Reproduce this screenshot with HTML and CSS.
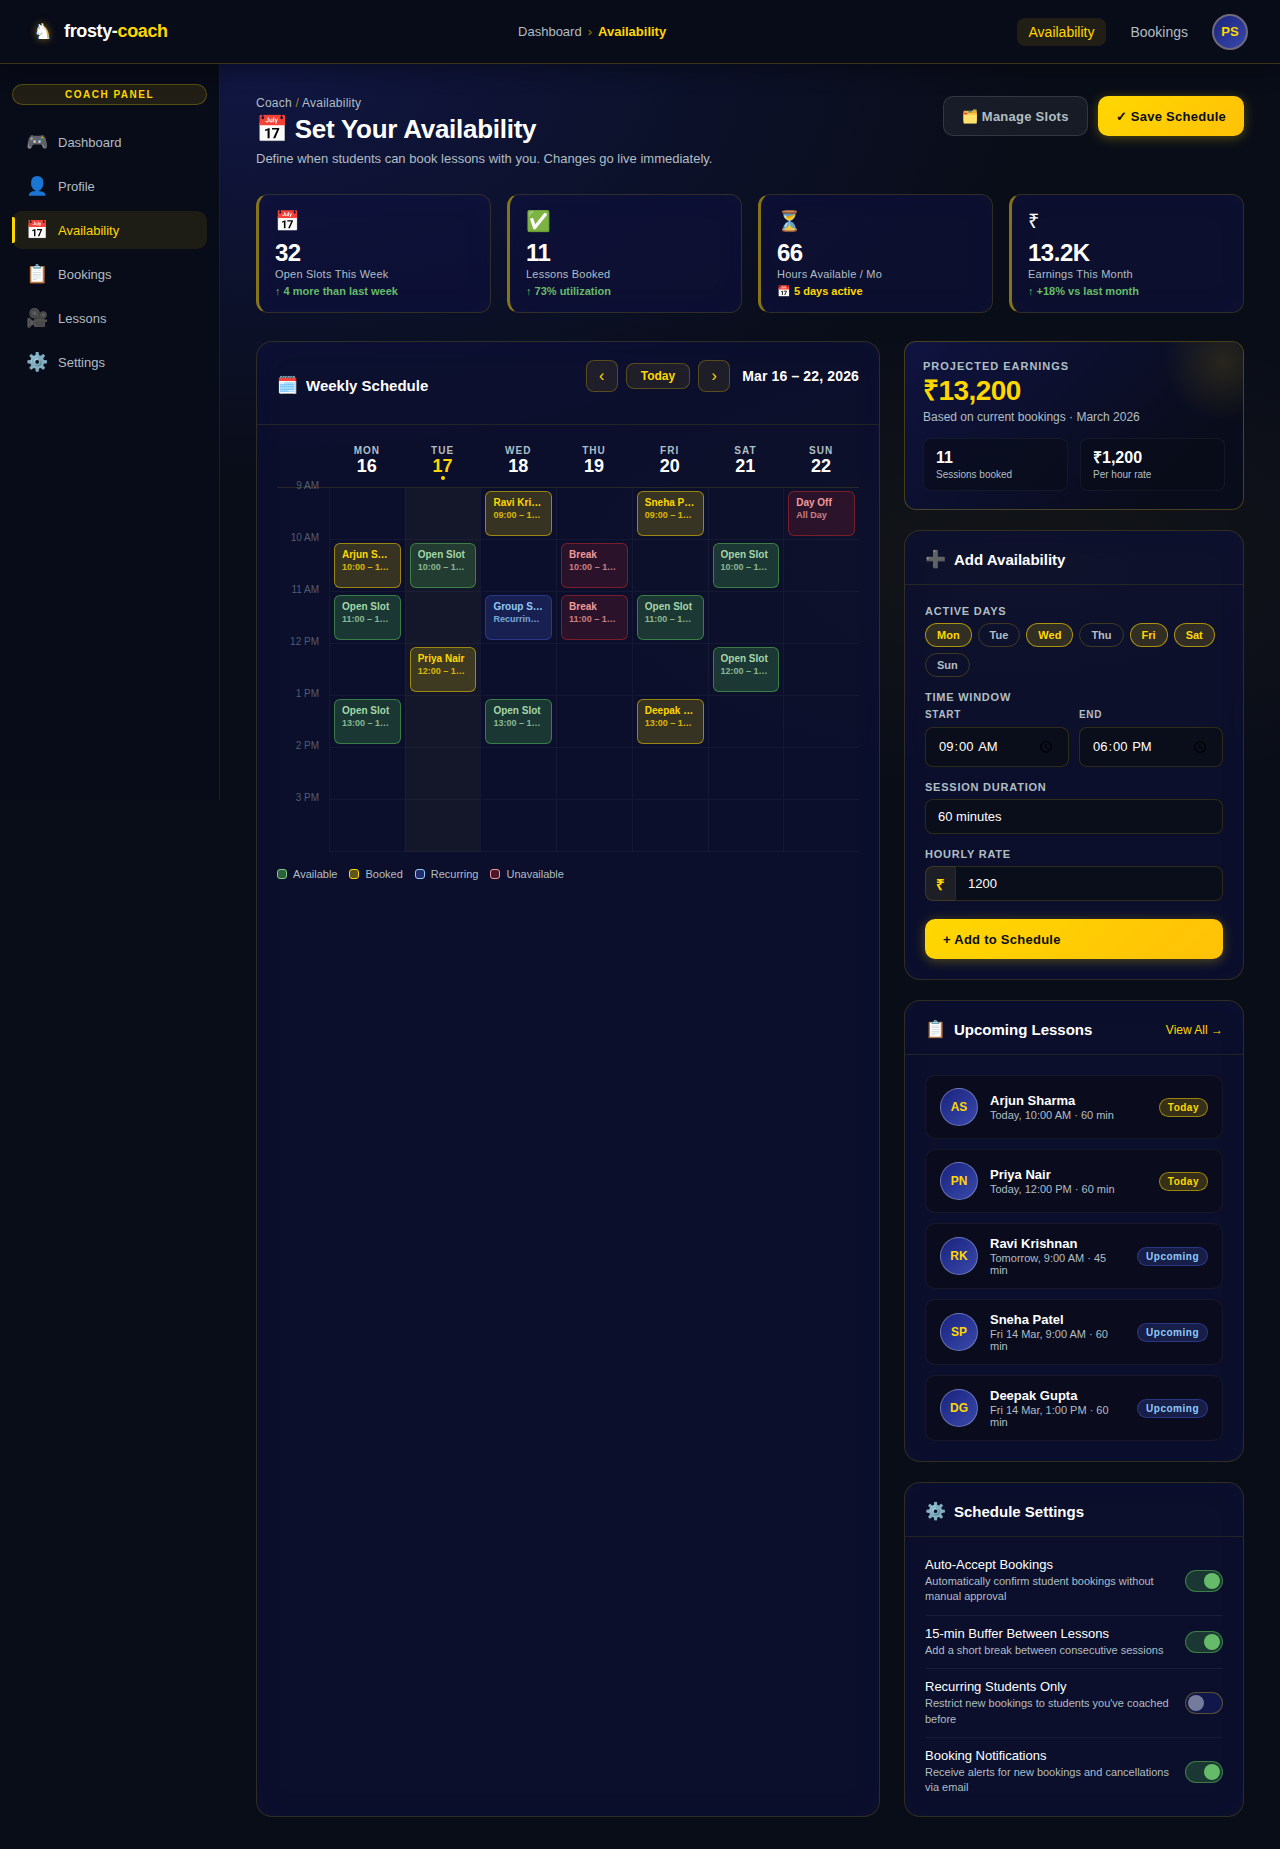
FILE: index.html
```html
<!DOCTYPE html>
<html lang="en">
<head>
  <meta charset="UTF-8">
  <meta name="viewport" content="width=device-width, initial-scale=1.0">
  <title>Availability - frosty-coach</title>
  <link rel="stylesheet" href="styles.css">
</head>
<body>

  <header class="topbar">
    <a class="logo" href="#">
      <span class="logo-icon">♞</span>
      <span>frosty-<span class="gold">coach</span></span>
    </a>
    <div class="topbar-path">
      <span>Dashboard</span>
      <span class="sep">›</span>
      <strong>Availability</strong>
    </div>
    <nav class="topbar-nav">
      <a class="active" href="#">Availability</a>
      <a href="#">Bookings</a>
      <div class="avatar avatar-me">PS</div>
    </nav>
  </header>

  <div class="layout">

    <aside class="sidebar">
      <div class="panel-tag">COACH PANEL</div>
      <nav class="side-nav">
        <a href="#"><span class="icon">🎮</span>Dashboard</a>
        <a href="#"><span class="icon">👤</span>Profile</a>
        <a class="active" href="#"><span class="icon">📅</span>Availability</a>
        <a href="#"><span class="icon">📋</span>Bookings</a>
        <a href="#"><span class="icon">🎥</span>Lessons</a>
        <a href="#"><span class="icon">⚙️</span>Settings</a>
      </nav>
    </aside>

    <main class="main">

      <div class="page-head">
        <div>
          <div class="crumbs">Coach <span class="sep">/</span> Availability</div>
          <h1>📅 Set Your Availability</h1>
          <p>Define when students can book lessons with you. Changes go live immediately.</p>
        </div>
        <div class="head-actions">
          <button class="btn btn-ghost" type="button">🗂️ Manage Slots</button>
          <button class="btn btn-gold" type="button">✓ Save Schedule</button>
        </div>
      </div>

      <section class="stats">
        <div class="stat">
          <div class="stat-icon">📅</div>
          <div class="stat-value">32</div>
          <div class="stat-label">Open Slots This Week</div>
          <div class="stat-note">↑ 4 more than last week</div>
        </div>
        <div class="stat">
          <div class="stat-icon">✅</div>
          <div class="stat-value">11</div>
          <div class="stat-label">Lessons Booked</div>
          <div class="stat-note">↑ 73% utilization</div>
        </div>
        <div class="stat">
          <div class="stat-icon">⏳</div>
          <div class="stat-value">66</div>
          <div class="stat-label">Hours Available / Mo</div>
          <div class="stat-note gold">📅 5 days active</div>
        </div>
        <div class="stat">
          <div class="stat-icon">₹</div>
          <div class="stat-value">13.2K</div>
          <div class="stat-label">Earnings This Month</div>
          <div class="stat-note">↑ +18% vs last month</div>
        </div>
      </section>

      <div class="columns">

        <!-- Weekly calendar -->
        <section class="card">
          <div class="card-head">
            <h2><span class="icon">🗓️</span>Weekly Schedule</h2>
            <div class="week-nav">
              <button class="arrow" type="button" aria-label="Previous week">‹</button>
              <button class="today" type="button">Today</button>
              <button class="arrow" type="button" aria-label="Next week">›</button>
              <span class="week-range">Mar 16 – 22, 2026</span>
            </div>
          </div>
          <div class="card-body">
            <table class="calendar">
              <thead>
                <tr>
                  <th class="time-col"></th>
                  <th>MON<span class="day-num">16</span></th>
                  <th class="is-today">TUE<span class="day-num">17</span></th>
                  <th>WED<span class="day-num">18</span></th>
                  <th>THU<span class="day-num">19</span></th>
                  <th>FRI<span class="day-num">20</span></th>
                  <th>SAT<span class="day-num">21</span></th>
                  <th>SUN<span class="day-num">22</span></th>
                </tr>
              </thead>
              <tbody>
                <tr>
                  <th><span>9 AM</span></th>
                  <td></td>
                  <td class="is-today"></td>
                  <td><div class="slot booked"><b>Ravi Krishnan</b><small>09:00 – 10:00</small></div></td>
                  <td></td>
                  <td><div class="slot booked"><b>Sneha Patel</b><small>09:00 – 10:00</small></div></td>
                  <td></td>
                  <td><div class="slot unavailable"><b>Day Off</b><small>All Day</small></div></td>
                </tr>
                <tr>
                  <th><span>10 AM</span></th>
                  <td><div class="slot booked"><b>Arjun Sharma</b><small>10:00 – 11:00</small></div></td>
                  <td class="is-today"><div class="slot available"><b>Open Slot</b><small>10:00 – 11:00</small></div></td>
                  <td></td>
                  <td><div class="slot unavailable"><b>Break</b><small>10:00 – 11:00</small></div></td>
                  <td></td>
                  <td><div class="slot available"><b>Open Slot</b><small>10:00 – 11:00</small></div></td>
                  <td></td>
                </tr>
                <tr>
                  <th><span>11 AM</span></th>
                  <td><div class="slot available"><b>Open Slot</b><small>11:00 – 12:00</small></div></td>
                  <td class="is-today"></td>
                  <td><div class="slot recurring"><b>Group Session</b><small>Recurring weekly</small></div></td>
                  <td><div class="slot unavailable"><b>Break</b><small>11:00 – 12:00</small></div></td>
                  <td><div class="slot available"><b>Open Slot</b><small>11:00 – 12:00</small></div></td>
                  <td></td>
                  <td></td>
                </tr>
                <tr>
                  <th><span>12 PM</span></th>
                  <td></td>
                  <td class="is-today"><div class="slot booked"><b>Priya Nair</b><small>12:00 – 13:00</small></div></td>
                  <td></td>
                  <td></td>
                  <td></td>
                  <td><div class="slot available"><b>Open Slot</b><small>12:00 – 13:00</small></div></td>
                  <td></td>
                </tr>
                <tr>
                  <th><span>1 PM</span></th>
                  <td><div class="slot available"><b>Open Slot</b><small>13:00 – 14:00</small></div></td>
                  <td class="is-today"></td>
                  <td><div class="slot available"><b>Open Slot</b><small>13:00 – 14:00</small></div></td>
                  <td></td>
                  <td><div class="slot booked"><b>Deepak Gupta</b><small>13:00 – 14:00</small></div></td>
                  <td></td>
                  <td></td>
                </tr>
                <tr>
                  <th><span>2 PM</span></th>
                  <td></td>
                  <td class="is-today"></td>
                  <td></td>
                  <td></td>
                  <td></td>
                  <td></td>
                  <td></td>
                </tr>
                <tr>
                  <th><span>3 PM</span></th>
                  <td></td>
                  <td class="is-today"></td>
                  <td></td>
                  <td></td>
                  <td></td>
                  <td></td>
                  <td></td>
                </tr>
              </tbody>
            </table>
            <div class="legend">
              <span><i class="dot available"></i>Available</span>
              <span><i class="dot booked"></i>Booked</span>
              <span><i class="dot recurring"></i>Recurring</span>
              <span><i class="dot unavailable"></i>Unavailable</span>
            </div>
          </div>
        </section>

        <div class="side-col">

          <section class="earnings">
            <div class="field-label">PROJECTED EARNINGS</div>
            <div class="earnings-total">₹13,200</div>
            <div class="earnings-sub">Based on current bookings · March 2026</div>
            <div class="earnings-grid">
              <div class="mini">
                <div class="mini-value">11</div>
                <div class="mini-label">Sessions booked</div>
              </div>
              <div class="mini">
                <div class="mini-value">₹1,200</div>
                <div class="mini-label">Per hour rate</div>
              </div>
            </div>
          </section>

          <section class="card">
            <div class="card-head">
              <h2><span class="icon">➕</span>Add Availability</h2>
            </div>
            <form class="card-body form">
              <div class="field">
                <span class="field-label">ACTIVE DAYS</span>
                <div class="days">
                  <button class="on" type="button" aria-pressed="true">Mon</button>
                  <button type="button" aria-pressed="false">Tue</button>
                  <button class="on" type="button" aria-pressed="true">Wed</button>
                  <button type="button" aria-pressed="false">Thu</button>
                  <button class="on" type="button" aria-pressed="true">Fri</button>
                  <button class="on" type="button" aria-pressed="true">Sat</button>
                  <button type="button" aria-pressed="false">Sun</button>
                </div>
              </div>
              <div class="field">
                <span class="field-label">TIME WINDOW</span>
                <div class="time-row">
                  <div class="field">
                    <label class="field-label small" for="start">START</label>
                    <input class="input time" type="time" id="start" value="09:00">
                  </div>
                  <div class="field">
                    <label class="field-label small" for="end">END</label>
                    <input class="input time" type="time" id="end" value="18:00">
                  </div>
                </div>
              </div>
              <div class="field">
                <label class="field-label" for="duration">SESSION DURATION</label>
                <select class="input" id="duration">
                  <option>60 minutes</option>
                </select>
              </div>
              <div class="field">
                <label class="field-label" for="rate">HOURLY RATE</label>
                <div class="rate">
                  <span class="prefix">₹</span>
                  <input class="input" type="text" id="rate" value="1200">
                </div>
              </div>
              <button class="btn btn-gold btn-wide" type="button">+ Add to Schedule</button>
            </form>
          </section>

          <section class="card">
            <div class="card-head">
              <h2><span class="icon">📋</span>Upcoming Lessons</h2>
              <a class="view-all" href="#">View All →</a>
            </div>
            <div class="card-body lessons">
              <div class="lesson">
                <div class="avatar">AS</div>
                <div class="lesson-info">
                  <div class="lesson-name">Arjun Sharma</div>
                  <div class="lesson-meta">Today, 10:00 AM · 60 min</div>
                </div>
                <span class="badge booked">Today</span>
              </div>
              <div class="lesson">
                <div class="avatar">PN</div>
                <div class="lesson-info">
                  <div class="lesson-name">Priya Nair</div>
                  <div class="lesson-meta">Today, 12:00 PM · 60 min</div>
                </div>
                <span class="badge booked">Today</span>
              </div>
              <div class="lesson">
                <div class="avatar">RK</div>
                <div class="lesson-info">
                  <div class="lesson-name">Ravi Krishnan</div>
                  <div class="lesson-meta">Tomorrow, 9:00 AM · 45 min</div>
                </div>
                <span class="badge recurring">Upcoming</span>
              </div>
              <div class="lesson">
                <div class="avatar">SP</div>
                <div class="lesson-info">
                  <div class="lesson-name">Sneha Patel</div>
                  <div class="lesson-meta">Fri 14 Mar, 9:00 AM · 60 min</div>
                </div>
                <span class="badge recurring">Upcoming</span>
              </div>
              <div class="lesson">
                <div class="avatar">DG</div>
                <div class="lesson-info">
                  <div class="lesson-name">Deepak Gupta</div>
                  <div class="lesson-meta">Fri 14 Mar, 1:00 PM · 60 min</div>
                </div>
                <span class="badge recurring">Upcoming</span>
              </div>
            </div>
          </section>

          <section class="card">
            <div class="card-head">
              <h2><span class="icon">⚙️</span>Schedule Settings</h2>
            </div>
            <div class="settings">
              <label class="setting">
                <span>
                  <span class="setting-name">Auto-Accept Bookings</span>
                  <span class="setting-desc">Automatically confirm student bookings without manual approval</span>
                </span>
                <input class="toggle" type="checkbox" checked>
              </label>
              <label class="setting">
                <span>
                  <span class="setting-name">15-min Buffer Between Lessons</span>
                  <span class="setting-desc">Add a short break between consecutive sessions</span>
                </span>
                <input class="toggle" type="checkbox" checked>
              </label>
              <label class="setting">
                <span>
                  <span class="setting-name">Recurring Students Only</span>
                  <span class="setting-desc">Restrict new bookings to students you've coached before</span>
                </span>
                <input class="toggle" type="checkbox">
              </label>
              <label class="setting">
                <span>
                  <span class="setting-name">Booking Notifications</span>
                  <span class="setting-desc">Receive alerts for new bookings and cancellations via email</span>
                </span>
                <input class="toggle" type="checkbox" checked>
              </label>
            </div>
          </section>

        </div>
      </div>
    </main>
  </div>

</body>
</html>
```
FILE: styles.css
```css
* {
  box-sizing: border-box;
  margin: 0;
  padding: 0;
}

:root {
  --gold: #ffd700;
  --muted: #b0bec5;
  --line: rgba(255, 215, 0, 0.15);
}

body {
  font-family: "Liberation Sans", Arial, sans-serif;
  color: #fff;
  background-color: #090d18;
  background-image:
    radial-gradient(ellipse 60% 50% at 20% 10%, rgba(26, 35, 126, 0.4), transparent 100%),
    radial-gradient(ellipse 40% 30% at 80% 70%, rgba(255, 215, 0, 0.04), transparent 100%);
  background-size: 100% 800px;
  background-repeat: no-repeat;
}

a {
  color: inherit;
  text-decoration: none;
}

button,
input,
select {
  font-family: inherit;
}

button {
  cursor: pointer;
}

.gold {
  color: var(--gold);
}

.sep {
  color: rgba(255, 215, 0, 0.6);
}

/* Top bar */
.topbar {
  position: sticky;
  top: 0;
  z-index: 10;
  display: flex;
  align-items: center;
  justify-content: space-between;
  height: 64px;
  padding: 0 32px;
  background-color: #080b18;
  border-bottom: 1px solid rgba(255, 215, 0, 0.2);
  box-shadow: 0 4px 24px rgba(0, 0, 0, 0.4);
}

.logo {
  display: flex;
  align-items: center;
  gap: 10px;
  font-size: 18px;
  font-weight: bold;
  letter-spacing: -0.02em;
}

.logo-icon {
  width: 22px;
  font-size: 22px;
  font-weight: normal;
  text-align: center;
  text-shadow: 0 0 8px rgba(255, 215, 0, 0.5);
}

.topbar-path {
  display: flex;
  gap: 6px;
  font-size: 13px;
  color: var(--muted);
}

.topbar-path strong {
  color: var(--gold);
}

.topbar-nav {
  display: flex;
  align-items: center;
  gap: 12px;
  font-size: 14px;
  color: var(--muted);
}

.topbar-nav a {
  padding: 6px 12px;
  border-radius: 8px;
}

.topbar-nav a.active {
  color: var(--gold);
  background-color: rgba(255, 215, 0, 0.1);
}

.avatar {
  display: flex;
  align-items: center;
  justify-content: center;
  flex-shrink: 0;
  width: 38px;
  height: 38px;
  border: 1px solid rgba(255, 255, 255, 0.3);
  border-radius: 50%;
  background: linear-gradient(135deg, #1a237e, #3949ab);
  color: var(--gold);
  font-size: 12px;
  font-weight: bold;
}

.avatar-me {
  width: 36px;
  height: 36px;
  border: 2px solid #6e6a7c;
  font-size: 13px;
}

/* Layout */
.layout {
  display: flex;
  align-items: flex-start;
}

.sidebar {
  position: sticky;
  top: 64px;
  flex-shrink: 0;
  width: 220px;
  height: 736px;
  padding: 20px 12px;
  background-color: #080b18;
  border-right: 1px solid rgba(255, 215, 0, 0.1);
}

.panel-tag {
  margin-bottom: 18px;
  padding: 4px 12px;
  border: 1px solid rgba(255, 215, 0, 0.25);
  border-radius: 20px;
  background-color: rgba(255, 215, 0, 0.1);
  color: var(--gold);
  font-size: 10px;
  font-weight: bold;
  letter-spacing: 0.15em;
  text-align: center;
}

.side-nav {
  display: flex;
  flex-direction: column;
  gap: 6px;
}

.side-nav a {
  display: flex;
  align-items: center;
  gap: 10px;
  height: 38px;
  padding: 0 14px;
  border-radius: 10px;
  color: var(--muted);
  font-size: 13px;
}

.side-nav .icon {
  width: 22px;
  font-size: 18px;
}

.side-nav a.active {
  position: relative;
  color: var(--gold);
  background-color: rgba(255, 215, 0, 0.09);
}

.side-nav a.active::before {
  content: "";
  position: absolute;
  left: 0;
  top: 6px;
  bottom: 6px;
  width: 3px;
  background-color: var(--gold);
  border-radius: 0 2px 2px 0;
}

.main {
  flex: 1;
  min-width: 0;
  padding: 32px 36px;
}

/* Page heading */
.page-head {
  display: flex;
  justify-content: space-between;
  align-items: flex-start;
  margin-bottom: 28px;
}

.crumbs {
  margin-bottom: 4px;
  color: var(--muted);
  font-size: 12px;
  letter-spacing: 0.02em;
}

.page-head h1 {
  margin-bottom: 6px;
  font-size: 26px;
  line-height: 31px;
  letter-spacing: -0.01em;
}

.page-head p {
  color: var(--muted);
  font-size: 13px;
}

.head-actions {
  display: flex;
  gap: 10px;
}

.btn {
  height: 40px;
  padding: 0 18px;
  border: none;
  border-radius: 10px;
  font-size: 13px;
  font-weight: bold;
  letter-spacing: 0.02em;
}

.btn-ghost {
  border: 1px solid rgba(255, 255, 255, 0.12);
  background-color: rgba(255, 255, 255, 0.06);
  color: var(--muted);
}

.btn-gold {
  background: linear-gradient(135deg, #ffd700, #ffc107);
  color: #0a0e17;
  box-shadow: 0 2px 12px rgba(255, 215, 0, 0.3);
}

.btn-wide {
  margin-top: 4px;
  text-align: left;
}

/* Stats */
.stats {
  display: grid;
  grid-template-columns: repeat(4, 1fr);
  gap: 16px;
  margin-bottom: 28px;
}

.stat {
  padding: 14px 16px;
  border: 1px solid var(--line);
  border-left: 3px solid rgba(255, 215, 0, 0.5);
  border-radius: 12px;
  background-color: rgba(15, 17, 60, 0.6);
  box-shadow: inset 0 0 30px rgba(26, 35, 126, 0.06);
}

.stat-icon {
  margin-bottom: 6px;
  font-size: 20px;
  line-height: 24px;
}

.stat-value {
  font-size: 24px;
  font-weight: bold;
  line-height: 28px;
  letter-spacing: -0.02em;
}

.stat-label {
  margin-bottom: 2px;
  color: var(--muted);
  font-size: 11px;
  line-height: 15px;
  letter-spacing: 0.02em;
}

.stat-note {
  color: #66bb6a;
  font-size: 11px;
  font-weight: bold;
  line-height: 14px;
}

.stat-note.gold {
  color: var(--gold);
}

/* Cards */
.columns {
  display: grid;
  grid-template-columns: minmax(0, 1fr) 340px;
  gap: 24px;
}

.side-col {
  display: flex;
  flex-direction: column;
  gap: 20px;
}

.card {
  border: 1px solid var(--line);
  border-radius: 16px;
  background-color: rgba(13, 17, 57, 0.6);
  box-shadow: inset 0 0 30px rgba(26, 35, 126, 0.06);
}

.card-head {
  display: flex;
  align-items: center;
  justify-content: space-between;
  padding: 18px 20px 13px;
  border-bottom: 1px solid rgba(255, 215, 0, 0.1);
}

.card-head h2 {
  display: flex;
  align-items: center;
  gap: 8px;
  font-size: 15px;
  line-height: 22px;
}

.card-head .icon {
  width: 21px;
  font-size: 17px;
}

.card-body {
  padding: 20px;
}

.view-all {
  color: var(--gold);
  font-size: 12px;
}

/* Calendar */
.week-nav {
  display: flex;
  align-items: center;
  gap: 8px;
  margin-bottom: 19px;
}

.week-nav button {
  border: 1px solid rgba(255, 215, 0, 0.25);
  border-radius: 8px;
  background-color: rgba(255, 215, 0, 0.08);
  color: var(--gold);
}

.week-nav .arrow {
  width: 32px;
  height: 32px;
  font-size: 16px;
}

.week-nav .today {
  height: 26px;
  padding: 0 14px;
  font-size: 12px;
  font-weight: bold;
}

.week-range {
  margin-left: 4px;
  font-size: 14px;
  font-weight: bold;
  letter-spacing: 0.01em;
}

.calendar {
  width: 100%;
  table-layout: fixed;
  border-collapse: separate;
  border-spacing: 0;
}

.calendar .time-col {
  width: 52px;
}

.calendar thead th {
  position: relative;
  padding-bottom: 10px;
  border-bottom: 1px solid rgba(255, 215, 0, 0.12);
  color: var(--muted);
  font-size: 10px;
  letter-spacing: 0.1em;
}

.day-num {
  display: block;
  color: #fff;
  font-size: 18px;
  line-height: 21px;
  letter-spacing: 0;
}

.is-today .day-num {
  color: var(--gold);
}

.calendar thead .is-today::after {
  content: "";
  position: absolute;
  left: 50%;
  bottom: 7px;
  width: 4px;
  height: 4px;
  margin-left: -2px;
  border-radius: 50%;
  background-color: var(--gold);
}

.calendar tbody th {
  padding-right: 10px;
  color: rgba(176, 190, 197, 0.45);
  font-size: 10px;
  font-weight: normal;
  text-align: right;
  vertical-align: top;
}

.calendar tbody th span {
  display: block;
  margin-top: -8px;
}

.calendar td {
  height: 52px;
  padding: 3px 4px;
  border-left: 1px solid rgba(255, 255, 255, 0.04);
  border-bottom: 1px solid rgba(255, 255, 255, 0.04);
}

.calendar td.is-today {
  background-color: rgba(255, 200, 0, 0.04);
}

.slot {
  height: 45px;
  padding: 5px 7px;
  border: 1px solid;
  border-radius: 6px;
}

.slot b,
.slot small {
  display: block;
  overflow: hidden;
  white-space: nowrap;
  text-overflow: ellipsis;
}

.slot b {
  margin-bottom: 2px;
  font-size: 10px;
}

.slot small {
  font-size: 9px;
  font-weight: bold;
  opacity: 0.8;
}

.available {
  border-color: rgba(76, 175, 80, 0.6);
  background-color: rgba(76, 175, 80, 0.25);
  color: #a5d6a7;
}

.booked {
  border-color: rgba(255, 215, 0, 0.5);
  background-color: rgba(255, 215, 0, 0.18);
  color: var(--gold);
}

.recurring {
  border-color: rgba(57, 73, 171, 0.6);
  background-color: rgba(57, 73, 171, 0.3);
  color: #90caf9;
}

.unavailable {
  border-color: rgba(198, 40, 40, 0.5);
  background-color: rgba(198, 40, 40, 0.16);
  color: #ef9a9a;
}

.legend {
  display: flex;
  gap: 12px;
  margin-top: 16px;
  color: var(--muted);
  font-size: 11px;
}

.legend span {
  display: flex;
  align-items: center;
  gap: 6px;
}

.dot {
  width: 10px;
  height: 10px;
  border: 1px solid;
  border-radius: 3px;
}

.dot.available {
  border-color: #81c784;
  background-color: rgba(76, 175, 80, 0.5);
}

.dot.booked {
  border-color: var(--gold);
  background-color: rgba(255, 215, 0, 0.35);
}

.dot.recurring {
  border-color: #90caf9;
  background-color: rgba(57, 73, 171, 0.5);
}

.dot.unavailable {
  border-color: #ef9a9a;
  background-color: rgba(198, 40, 40, 0.35);
}

/* Earnings */
.earnings {
  position: relative;
  overflow: hidden;
  padding: 18px;
  border: 1px solid rgba(255, 215, 0, 0.25);
  border-radius: 12px;
  background: linear-gradient(135deg, #0f1340, #090c1a 80%);
}

.earnings::after {
  content: "";
  position: absolute;
  top: -40px;
  right: -40px;
  width: 120px;
  height: 120px;
  background: radial-gradient(circle, rgba(255, 215, 0, 0.12), transparent 70%);
}

.field-label {
  color: var(--muted);
  font-size: 11px;
  font-weight: bold;
  line-height: 12px;
  letter-spacing: 0.07em;
}

.field-label.small {
  font-size: 10px;
}

.earnings .field-label {
  letter-spacing: 0.09em;
}

.earnings-total {
  color: var(--gold);
  font-size: 28px;
  font-weight: bold;
  line-height: 38px;
  letter-spacing: -0.02em;
}

.earnings-sub {
  margin-bottom: 14px;
  color: var(--muted);
  font-size: 12px;
  line-height: 14px;
}

.earnings-grid {
  display: grid;
  grid-template-columns: 1fr 1fr;
  gap: 12px;
}

.mini {
  padding: 10px 12px;
  border: 1px solid rgba(255, 255, 255, 0.05);
  border-radius: 8px;
  background-color: rgba(8, 11, 24, 0.6);
}

.mini-value {
  font-size: 16px;
  font-weight: bold;
  line-height: 18px;
}

.mini-label {
  margin-top: 2px;
  color: var(--muted);
  font-size: 10px;
}

/* Form */
.form {
  display: flex;
  flex-direction: column;
  gap: 14px;
}

.field {
  display: flex;
  flex-direction: column;
  gap: 6px;
  min-width: 0;
}

.days {
  display: flex;
  flex-wrap: wrap;
  gap: 6px;
}

.days button {
  height: 24px;
  padding: 0 11px;
  border: 1px solid rgba(255, 215, 0, 0.2);
  border-radius: 20px;
  background: none;
  color: var(--muted);
  font-size: 11px;
  font-weight: bold;
}

.days .on {
  border-color: rgba(255, 215, 0, 0.6);
  background-color: rgba(255, 215, 0, 0.15);
  color: var(--gold);
}

.time-row {
  display: grid;
  grid-template-columns: 1fr 1fr;
  gap: 10px;
}

.input {
  width: 100%;
  height: 35px;
  padding: 0 12px;
  border: 1px solid var(--line);
  border-radius: 8px;
  background-color: #0a0d1a;
  color: #fff;
  font-size: 13px;
  appearance: none;
}

.input.time {
  height: 40px;
}

.rate {
  display: flex;
}

.prefix {
  display: flex;
  align-items: center;
  justify-content: center;
  width: 30px;
  border: 1px solid var(--line);
  border-right: none;
  border-radius: 8px 0 0 8px;
  background-color: rgba(255, 215, 0, 0.08);
  color: var(--gold);
  font-size: 15px;
  font-weight: bold;
}

.rate .input {
  flex: 1;
  border-radius: 0 8px 8px 0;
}

/* Lessons */
.lessons {
  display: flex;
  flex-direction: column;
  gap: 10px;
}

.lesson {
  display: flex;
  align-items: center;
  gap: 12px;
  padding: 12px 14px;
  border: 1px solid rgba(255, 255, 255, 0.05);
  border-radius: 10px;
  background-color: #0a0c1e;
}

.lesson-info {
  flex: 1;
  min-width: 0;
}

.lesson-name {
  margin-bottom: 1px;
  font-size: 13px;
  font-weight: bold;
  line-height: 15px;
}

.lesson-meta {
  color: var(--muted);
  font-size: 11px;
  line-height: 12px;
}

.badge {
  padding: 3px 8px;
  border: 1px solid;
  border-radius: 20px;
  font-size: 10px;
  font-weight: bold;
  letter-spacing: 0.05em;
}

.badge.booked {
  border-color: rgba(255, 215, 0, 0.5);
}

.badge.recurring {
  border-color: rgba(57, 73, 171, 0.6);
}

/* Settings */
.settings {
  padding: 10px 20px;
}

.setting {
  display: flex;
  align-items: center;
  justify-content: space-between;
  gap: 14px;
  padding: 10px 0;
  border-bottom: 1px solid rgba(255, 255, 255, 0.05);
}

.setting:last-child {
  border-bottom: none;
}

.setting-name,
.setting-desc {
  display: block;
}

.setting-name {
  margin-bottom: 2px;
  font-size: 13px;
  line-height: 15px;
}

.setting-desc {
  color: var(--muted);
  font-size: 11px;
  line-height: 1.4;
}

.toggle {
  display: flex;
  flex-shrink: 0;
  width: 38px;
  height: 22px;
  padding: 2px;
  border: 1px solid rgba(255, 215, 0, 0.3);
  border-radius: 20px;
  background-color: rgba(26, 35, 126, 0.4);
  appearance: none;
}

.toggle::before {
  content: "";
  width: 16px;
  height: 16px;
  border-radius: 50%;
  background-color: #757b9b;
}

.toggle:checked {
  justify-content: flex-end;
  border-color: rgba(76, 175, 80, 0.6);
  background-color: rgba(76, 175, 80, 0.25);
}

.toggle:checked::before {
  background-color: #66bb6a;
}
```
